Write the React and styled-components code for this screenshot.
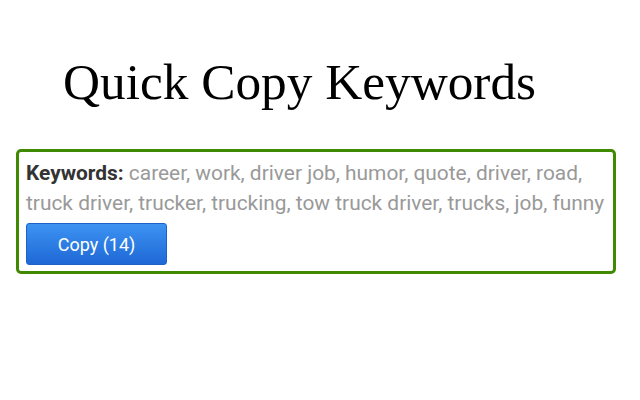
import React from 'react';
import styled, { createGlobalStyle } from 'styled-components';

const GlobalStyle = createGlobalStyle`
  body {
    margin: 0;
    background: #fff;
  }
`;

const Page = styled.div`
  padding: 50px 16px 0 16px;
`;

const Title = styled.h1`
  margin: 0 0 35px 47px;
  font-family: "Liberation Serif", "Times New Roman", serif;
  font-weight: normal;
  font-size: 51.3px;
  line-height: 64px;
  color: #000;
`;

const Box = styled.div`
  width: 600px;
  box-sizing: border-box;
  border: 3px solid #3f8a00;
  border-radius: 5px;
  padding: 6px 7px 6px 7px;
  font-family: Roboto, "Liberation Sans", sans-serif;
  font-size: 20.9px;
  line-height: 30px;
`;

const Label = styled.span`
  font-weight: bold;
  color: #333;
`;

const Words = styled.span`
  color: #999;
`;

const CopyButton = styled.button`
  display: block;
  margin-top: 5px;
  width: 141px;
  height: 42px;
  border: 1px solid #1d62c8;
  border-radius: 3px;
  background: linear-gradient(#3d93f2, #1e68d6);
  color: #fff;
  font-family: Roboto, "Liberation Sans", sans-serif;
  font-size: 18px;
  cursor: pointer;
`;

const keywords = [
  'career', 'work', 'driver job', 'humor', 'quote', 'driver', 'road',
  'truck driver', 'trucker', 'trucking', 'tow truck driver', 'trucks', 'job', 'funny',
];

export default function App() {
  return (
    <>
      <GlobalStyle />
      <Page>
        <Title>Quick Copy Keywords</Title>
        <Box>
          <Label>Keywords:</Label> <Words>{keywords.join(', ')}</Words>
          <CopyButton>Copy ({keywords.length})</CopyButton>
        </Box>
      </Page>
    </>
  );
}
